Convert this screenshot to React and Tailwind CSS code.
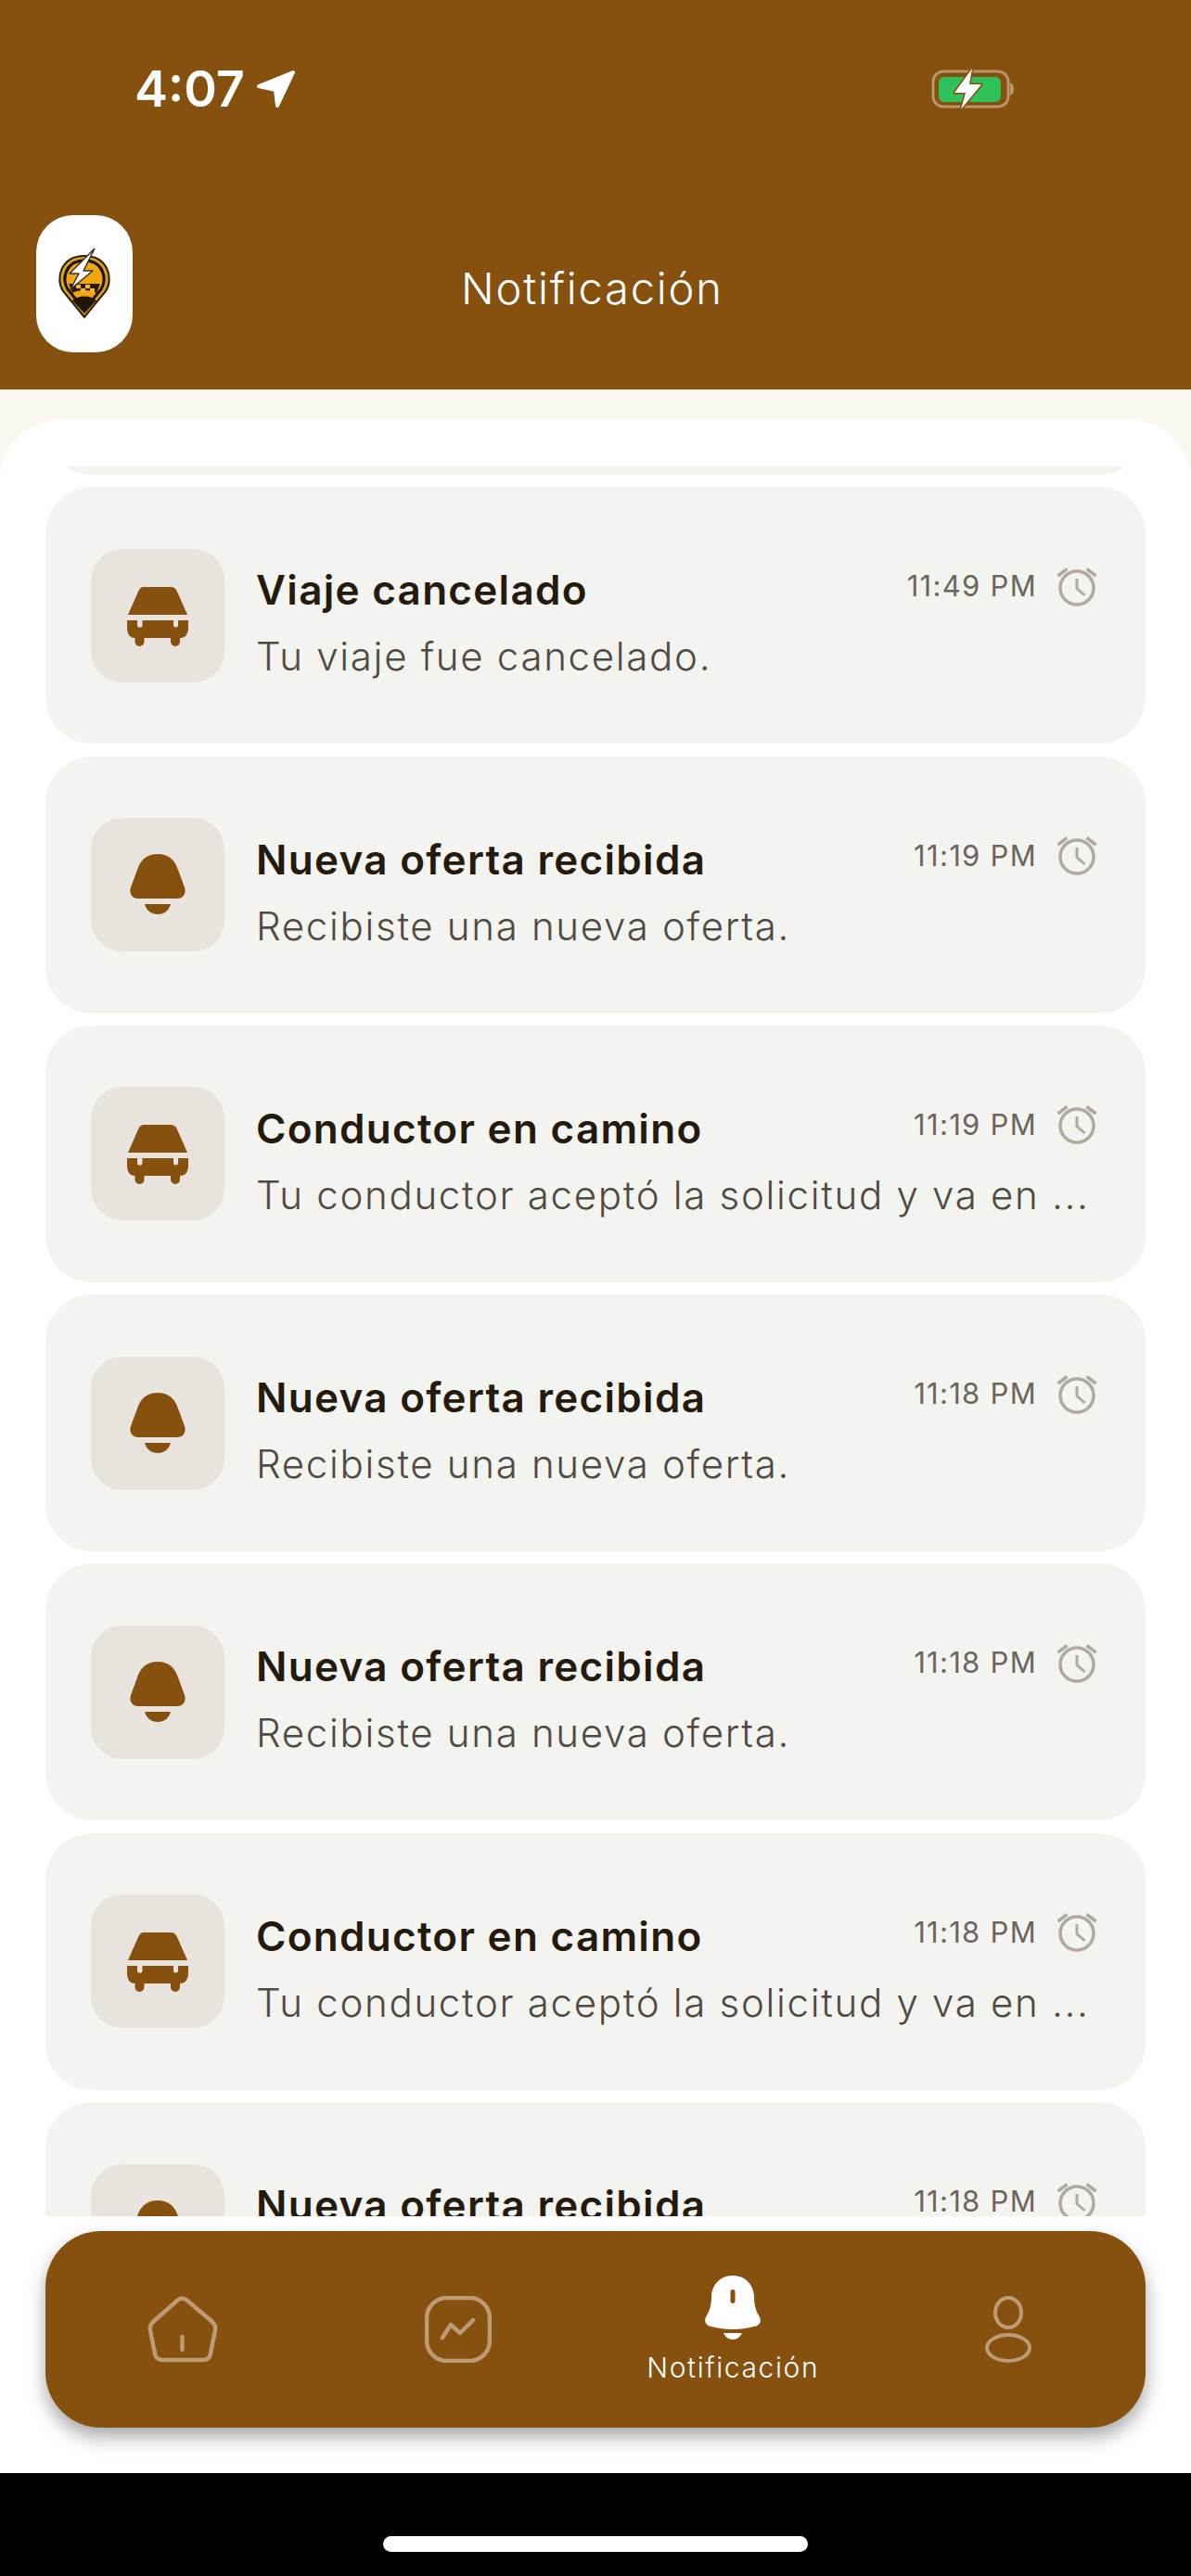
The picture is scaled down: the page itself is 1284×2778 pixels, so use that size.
import React from 'react';

const items = [
  { icon: 'car', title: 'Viaje cancelado', text: 'Tu viaje fue cancelado.', time: '11:49 PM' },
  { icon: 'bell', title: 'Nueva oferta recibida', text: 'Recibiste una nueva oferta.', time: '11:19 PM' },
  { icon: 'car', title: 'Conductor en camino', text: 'Tu conductor aceptó la solicitud y va en ...', time: '11:19 PM' },
  { icon: 'bell', title: 'Nueva oferta recibida', text: 'Recibiste una nueva oferta.', time: '11:18 PM' },
  { icon: 'bell', title: 'Nueva oferta recibida', text: 'Recibiste una nueva oferta.', time: '11:18 PM' },
  { icon: 'car', title: 'Conductor en camino', text: 'Tu conductor aceptó la solicitud y va en ...', time: '11:18 PM' },
  { icon: 'bell', title: 'Nueva oferta recibida', text: 'Recibiste una nueva oferta.', time: '11:18 PM' },
];

function CarIcon() {
  return (
    <svg width="144" height="144" viewBox="0 0 144 144" fill="#86500e">
      <path d="M57 41H86Q91 41 93 46L104 71H40L51 46Q53 41 57 41Z" />
      <path d="M39 77H50V82a2.75 2.75 0 0 0 5.500 0V77H89V82a2.500 2.500 0 0 0 5 0V77H105V84Q105 96 96 96V100a5 5 0 0 1-10 0V96H57.500V100a5 5 0 0 1-10 0V96Q39 96 39 84Z" />
    </svg>
  );
}

function BellIcon() {
  return (
    <svg width="144" height="144" viewBox="0 0 144 144" fill="#86500e">
      <path d="M72 39C84 39 91 46 94 56L101 75C103 81 100 87 93 87H51C44 87 41 81 43 75L50 56C53 46 60 39 72 39Z" />
      <path d="M58 93H86C84 100 79 104 72 104C65 104 60 100 58 93Z" />
    </svg>
  );
}

function ClockIcon() {
  return (
    <svg width="48" height="48" viewBox="0 0 48 48" fill="none" stroke="#b0a99f" strokeWidth="3.5">
      <circle cx="24" cy="24" r="18" />
      <path d="M3.500 11L13.500 3.500M34.500 3.500L44.500 11" />
      <path d="M24 14V24.500L32.500 32" strokeWidth="3" />
    </svg>
  );
}

function Logo() {
  return (
    <svg width="58" height="76" viewBox="0 0 58 76">
      <path d="M29 74L6 46C-3 32 4 8 29 8C54 8 61 32 52 46Z" fill="#d9a21b" stroke="#2a1c08" strokeWidth="2" />
      <path d="M29 66L11 44C4 32 9 13 29 13C49 13 54 32 47 44Z" fill="#f0a511" stroke="#17110a" strokeWidth="3" />
      <path d="M12 38H46L42 48C36 44 22 44 16 48Z" fill="#2a1c08" />
      <path d="M20 39h5v4h-5zM30 39h5v4h-5zM25 43h5v4h-5zM35 43h5v4h-5z" fill="#f5b81e" />
      <path d="M16 56C22 50 36 50 42 56L29 70Z" fill="#20160a" />
      <path d="M40 0L28 24H38L14 44L23 27H13Z" fill="#fff" stroke="#3a3226" strokeWidth="1.5" strokeLinejoin="round" />
    </svg>
  );
}

function NotificationCard({ item }) {
  return (
    <div className="flex h-[277px] shrink-0 items-center gap-[34px] rounded-[50px] bg-[#f3f3f0] pl-[49px] pr-[50px]">
      <div className="flex h-[144px] w-[144px] shrink-0 items-center justify-center rounded-[34px] bg-[#e8e3dc]">
        {item.icon === 'car' ? <CarIcon /> : <BellIcon />}
      </div>
      <div className="min-w-0 flex-1">
        <div className="flex items-start justify-between">
          <p className="pt-[17px] text-[44px] font-semibold leading-[52px] tracking-[1.3px] text-[#241a0e]">{item.title}</p>
          <div className="flex items-center gap-[19px] pt-[15px]">
            <span className="mb-[3px] text-[31px] leading-[48px] tracking-[1.3px] text-[#6b655e]">{item.time}</span>
            <ClockIcon />
          </div>
        </div>
        <p className="mt-[20px] whitespace-nowrap text-[42px] font-light leading-[52px] tracking-[1.7px] text-[#504a42]">{item.text}</p>
      </div>
    </div>
  );
}

function NavTab({ children, label }) {
  return (
    <div className="flex flex-col items-center justify-center">
      {children}
      {label && <span className="mt-[12px] text-[30px] font-light leading-[36px] tracking-[1.6px] text-white">{label}</span>}
    </div>
  );
}

export default function App() {
  return (
    <div className="flex h-[2778px] w-[1284px] flex-col overflow-hidden bg-[#faf8ee] font-[Inter,sans-serif]">
      {/* cabecera */}
      <header className="h-[420px] shrink-0 bg-[#86500e] pl-[39px] pr-[190px] pt-[66px]">
        <div className="flex items-center justify-between pl-[106px]">
          <div className="flex items-center gap-[12px]">
            <span className="text-[54px] font-semibold leading-[60px] text-white">4:07</span>
            <svg width="44" height="44" viewBox="0 0 44 44" fill="#fff" stroke="#fff" strokeWidth="4" strokeLinejoin="round">
              <path d="M40 4L3 19L21 23L23 40Z" />
            </svg>
          </div>
          <svg width="90" height="46" viewBox="0 0 90 46">
            <rect x="2" y="4" width="81" height="38" rx="11" fill="none" stroke="#b9966b" strokeWidth="3" />
            <rect x="8" y="10" width="67" height="27" rx="6" fill="#2fc25b" />
            <path d="M85 16C88 17 89 20 89 23C89 26 88 29 85 30Z" fill="#b9966b" />
            <path d="M44 1L25 27H37L32 45L54 18H41Z" fill="#fff" stroke="#86500e" strokeWidth="3" paintOrder="stroke" strokeLinejoin="round" />
          </svg>
        </div>
        <div className="mt-[106px] flex items-center">
          <div className="flex h-[148px] w-[104px] items-center justify-center rounded-[40px] bg-white">
            <Logo />
          </div>
          <h1 className="ml-[354px] pt-[10px] text-[47px] font-light leading-[56px] tracking-[1.8px] text-white">Notificación</h1>
        </div>
      </header>

      {/* contenido */}
      <main className="flex flex-1 flex-col pt-[33px]">
        <div className="flex flex-1 flex-col rounded-t-[64px] bg-white px-[49px] pt-[50px]">
          <div className="flex h-[1887px] shrink-0 flex-col gap-[13.3px] overflow-hidden">
            {/* la tarjeta anterior, casi fuera del scroll */}
            <div className="-mt-[268px] h-[277px] shrink-0 rounded-[50px] bg-[#f3f3f0]" />
            {items.map((item, i) => (
              <NotificationCard key={i} item={item} />
            ))}
          </div>

          <nav className="mt-[16px] grid h-[212px] shrink-0 grid-cols-4 rounded-[60px] bg-[#86500e] shadow-[0_10px_20px_rgba(0,0,0,0.35)]">
            <NavTab>
              <svg width="76" height="72" viewBox="0 0 76 72" fill="none" stroke="#bd9b75" strokeWidth="4.5" strokeLinecap="round">
                <path d="M32 5Q37 0 43 5L70 28Q74 32 73 37L68 62Q67 69 60 69H16Q9 69 8 62L3 37Q2 32 6 28Z" />
                <path d="M37.500 44V58" />
              </svg>
            </NavTab>
            <NavTab>
              <svg width="72" height="72" viewBox="0 0 72 72" fill="none" stroke="#bd9b75" strokeWidth="4.5" strokeLinecap="round" strokeLinejoin="round">
                <rect x="2" y="2" width="68" height="68" rx="22" />
                <path d="M19 45L28 31L38 40L52 26" />
              </svg>
            </NavTab>
            <NavTab label="Notificación">
              <svg width="60" height="69" viewBox="0 0 60 69" fill="#fff">
                <path fillRule="evenodd" d="M30 0C43 0 52 9 53 22C53 32 55 38 58 43C62 49 59 54 53 55C38 59 22 59 7 55C1 54-2 49 2 43C5 38 7 32 7 22C8 9 17 0 30 0ZM30 15C28.500 15 27.500 16 27.500 17.500V27.500C27.500 29 28.500 30 30 30C31.500 30 32.500 29 32.500 27.500V17.500C32.500 16 31.500 15 30 15Z" />
                <path d="M20 62H40C38 66 35 69 30 69C25 69 22 66 20 62Z" />
              </svg>
            </NavTab>
            <NavTab>
              <svg width="52" height="72" viewBox="0 0 52 72" fill="none" stroke="#bd9b75" strokeWidth="4" className="blur-[0.6px]">
                <ellipse cx="26" cy="18" rx="14" ry="16" />
                <ellipse cx="26" cy="56" rx="23" ry="14" />
              </svg>
            </NavTab>
          </nav>
        </div>
      </main>

      {/* barra inferior */}
      <div className="flex h-[111px] shrink-0 justify-center bg-black pt-[68px]">
        <div className="h-[17px] w-[458px] rounded-full bg-white" />
      </div>
    </div>
  );
}
